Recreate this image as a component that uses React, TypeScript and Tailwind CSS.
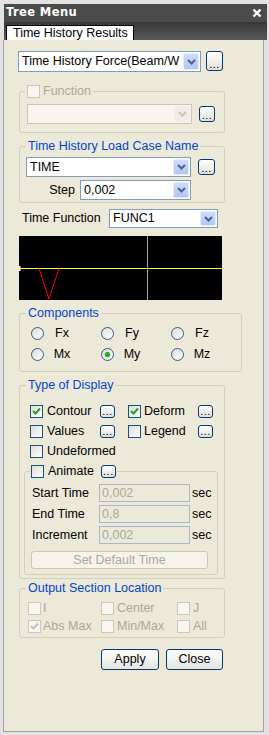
import React from "react";

const FONT = "font-['Liberation_Sans',Arial,sans-serif]";

function Chevron({ color }: { color: string }) {
  return (
    <svg width="9" height="6" viewBox="0 0 9 6">
      <polyline points="1,1 4.5,4.5 8,1" fill="none" stroke={color} strokeWidth="2" />
    </svg>
  );
}

function Combo({ className, text, disabled }: { className: string; text?: string; disabled?: boolean }) {
  return (
    <div
      className={`flex items-stretch border p-[1px] ${
        disabled ? "border-[#c9c7ba] bg-[#f6f5f0]" : "border-[#7f9db9] bg-white"
      } ${className}`}
    >
      <div className="flex-1 flex items-center pl-[2px] overflow-hidden whitespace-nowrap">{text}</div>
      <div
        className={`w-[16px] shrink-0 flex items-center justify-center rounded-[2px] border ${
          disabled
            ? "border-[#f0efe9] bg-[#eeede7]"
            : "border-[#e3ebfd] bg-gradient-to-b from-[#cddcfd] to-[#b1c6f5]"
        }`}
      >
        <Chevron color={disabled ? "#c9c7ba" : "#4d6185"} />
      </div>
    </div>
  );
}

function Dots({ className }: { className: string }) {
  return (
    <div
      className={`flex items-end justify-center rounded-[3px] border border-[#003c74] bg-gradient-to-b from-white to-[#e2e1d9] ${className}`}
    >
      <span className="text-[11px] leading-[9px] pb-[1px] tracking-[0.5px]">...</span>
    </div>
  );
}

function Check({ checked, disabled }: { checked?: boolean; disabled?: boolean }) {
  return (
    <div
      className={`w-[13px] h-[13px] shrink-0 flex items-center justify-center border ${
        disabled
          ? "border-[#cac8bb] bg-[#f7f6f1]"
          : "border-[#1c5180] bg-gradient-to-br from-[#dcdcd7] to-white"
      }`}
    >
      {checked && (
        <svg width="9" height="9" viewBox="0 0 9 9">
          <polyline
            points="1,4 3.5,6.5 8,1.5"
            fill="none"
            stroke={disabled ? "#c4c2b6" : "#21a121"}
            strokeWidth="2"
          />
        </svg>
      )}
    </div>
  );
}

function Radio({ checked }: { checked?: boolean }) {
  return (
    <div className="w-[13px] h-[13px] shrink-0 rounded-full border border-[#2f5d8a] bg-gradient-to-br from-[#dcdcd7] to-white flex items-center justify-center">
      {checked && <div className="w-[5px] h-[5px] rounded-full bg-[#2aa72a] shadow-[0_0_1px_#58c558]" />}
    </div>
  );
}

function Legend({ children }: { children: React.ReactNode }) {
  return <legend className="ml-[6px] px-[2px] text-[#0046d5] leading-[14px]">{children}</legend>;
}

function TimeRow({ label, value }: { label: string; value: string }) {
  return (
    <div className="flex items-center h-[18px]">
      <div className="w-[67px]">{label}</div>
      <div className="w-[91px] h-[18px] border border-[#a6b8cc] bg-[#ece9d8] text-[#aca899] pl-[2px] flex items-center">
        {value}
      </div>
      <div className="ml-[2px]">sec</div>
    </div>
  );
}

export default function App() {
  return (
    <div className={`w-[269px] h-[735px] bg-[#e2e2e2] pl-[3px] pr-[2px] pt-[4px] pb-[3px] flex flex-col text-[12.5px] text-black ${FONT}`}>
      <div className="h-[18px] ml-[1px] bg-[#4b4b4b] flex items-center justify-between pl-[2px] pr-[5px]">
        <span className="text-white font-bold text-[11.5px] tracking-[0.4px] font-['DejaVu_Sans',sans-serif]">Tree Menu</span>
        <svg width="10" height="10" viewBox="0 0 10 10">
          <path d="M1.5 1.5 L8.5 8.5 M8.5 1.5 L1.5 8.5" stroke="white" strokeWidth="2.4" />
        </svg>
      </div>
      <div className="h-[18px] ml-[1px] bg-gradient-to-b from-[#383838] to-[#5a5a5a] flex items-end pl-[2px]">
        <div className="w-[128px] h-[15px] bg-white border border-b-0 border-black pl-[6px] leading-[14px] whitespace-nowrap">
          Time History Results
        </div>
      </div>
      <div className="flex-1 mr-[3px] bg-[#ece9d8] border-x border-b border-[#a3a3a3] pl-[14px] flex flex-col">
        <div className="mt-[11px] flex items-start">
          <Combo className="w-[183px] h-[21px]" text="Time History Force(Beam/W" />
          <Dots className="ml-[5px] w-[17px] h-[20px]" />
        </div>

        <fieldset className="mt-[12px] ml-[1px] w-[206px] rounded-[3px] border border-[#d0d0bf] pb-[8px]">
          <legend className="ml-[5px] px-[2px] leading-[14px]">
            <span className="flex items-center gap-[3px] text-[#aca899]">
              <Check disabled />
              Function
            </span>
          </legend>
          <div className="mt-[6px] pl-[7px] flex items-center">
            <Combo className="w-[165px] h-[20px]" disabled />
            <Dots className="ml-[7px] w-[16px] h-[16px]" />
          </div>
        </fieldset>

        <fieldset className="mt-[6px] ml-[1px] w-[206px] rounded-[3px] border border-[#d0d0bf] pb-[2px]">
          <Legend>Time History Load Case Name</Legend>
          <div className="mt-[4px] pl-[6px] flex items-center">
            <Combo className="w-[165px] h-[20px]" text="TIME" />
            <Dots className="ml-[7px] w-[17px] h-[16px]" />
          </div>
          <div className="mt-[3px] pl-[6px] flex items-center">
            <div className="w-[49px] text-right">Step</div>
            <Combo className="ml-[5px] w-[111px] h-[20px]" text="0,002" />
          </div>
        </fieldset>

        <div className="mt-[6px] pl-[4px] flex items-center">
          <div className="w-[87px]">Time Function</div>
          <Combo className="w-[109px] h-[19px]" text="FUNC1" />
        </div>

        <svg className="mt-[8px] ml-[1px]" width="203" height="64" viewBox="0 0 203 64">
          <rect width="203" height="64" fill="#000" />
          <line x1="128.5" y1="0" x2="128.5" y2="64" stroke="#a8a8a8" strokeWidth="1" />
          <line x1="0" y1="32.5" x2="203" y2="32.5" stroke="#ffff00" strokeWidth="1" />
          <polyline points="20,32.5 30,63 40,32.5" fill="none" stroke="#ff0000" strokeWidth="1" />
          <rect x="0" y="30" width="1.5" height="5" fill="#fff" />
        </svg>

        <fieldset className="mt-[6px] ml-[1px] w-[206px] rounded-[3px] border border-[#d0d0bf] pb-[10px]">
          <Legend>Components</Legend>
          <div className="mt-[7px] pl-[11px] flex flex-col gap-[8px]">
            {[
              ["Fx", "Fy", "Fz"],
              ["Mx", "My", "Mz"],
            ].map((row) => (
              <div key={row[0]} className="flex h-[13px]">
                {row.map((c) => (
                  <div key={c} className="w-[70px] flex items-center">
                    <Radio checked={c === "My"} />
                    <div className="ml-[2px] w-[32px] text-center leading-[13px]">{c}</div>
                  </div>
                ))}
              </div>
            ))}
          </div>
        </fieldset>

        <fieldset className="mt-[6px] ml-[1px] w-[206px] rounded-[3px] border border-[#d0d0bf]">
          <Legend>Type of Display</Legend>
          <div className="mt-[13px] pl-[10px] flex flex-col gap-[7px]">
            <div className="flex items-center h-[13px]">
              <div className="w-[70px] flex items-center">
                <Check checked />
                <span className="ml-[4px]">Contour</span>
              </div>
              <Dots className="w-[15px] h-[13px]" />
              <div className="ml-[13px] w-[70px] flex items-center">
                <Check checked />
                <span className="ml-[3px]">Deform</span>
              </div>
              <Dots className="w-[15px] h-[13px]" />
            </div>
            <div className="flex items-center h-[13px]">
              <div className="w-[70px] flex items-center">
                <Check />
                <span className="ml-[4px]">Values</span>
              </div>
              <Dots className="w-[15px] h-[13px]" />
              <div className="ml-[13px] w-[70px] flex items-center">
                <Check />
                <span className="ml-[3px]">Legend</span>
              </div>
              <Dots className="w-[15px] h-[13px]" />
            </div>
            <div className="flex items-center h-[13px]">
              <Check />
              <span className="ml-[4px]">Undeformed</span>
            </div>
          </div>
          <fieldset className="mt-[7px] ml-[4px] mb-[3px] w-[194px] rounded-[3px] border border-[#d0d0bf] pb-[5px]">
            <legend className="ml-[5px] px-[1px]">
              <span className="flex items-center h-[13px]">
                <Check />
                <span className="ml-[4px] mr-[7px]">Animate</span>
                <Dots className="w-[15px] h-[13px]" />
              </span>
            </legend>
            <div className="mt-[6px] pl-[7px] flex flex-col gap-[3px]">
              <TimeRow label="Start Time" value="0,002" />
              <TimeRow label="End Time" value="0,8" />
              <TimeRow label="Increment" value="0,002" />
            </div>
            <div className="mt-[7px] ml-[6px] w-[177px] h-[18px] rounded-[3px] border border-[#c9c7ba] bg-[#f5f4ea] text-[#aca899] flex items-center justify-center">
              Set Default Time
            </div>
          </fieldset>
        </fieldset>

        <fieldset className="mt-[2px] ml-[1px] w-[206px] rounded-[3px] border border-[#d0d0bf] pb-[4px]">
          <Legend>Output Section Location</Legend>
          <div className="mt-[7px] pl-[8px] flex flex-col gap-[5px] text-[#aca899]">
            {[
              [["I", false], ["Center", false], ["J", false]],
              [["Abs Max", true], ["Min/Max", false], ["All", false]],
            ].map((row, i) => (
              <div key={i} className="flex h-[13px]">
                {row.map(([label, checked], j) => (
                  <div
                    key={label as string}
                    className={`flex items-center ${j === 0 ? "w-[73px]" : j === 1 ? "w-[76px]" : ""}`}
                  >
                    <Check disabled checked={checked as boolean} />
                    <span className={j === 0 ? "ml-[2px]" : "ml-[3px]"}>{label as string}</span>
                  </div>
                ))}
              </div>
            ))}
          </div>
        </fieldset>

        <div className="mt-[11px] ml-[83px] flex">
          <div className="w-[58px] h-[21px] rounded-[3px] border border-[#003c74] bg-gradient-to-b from-white to-[#e6e5de] flex items-center justify-center">
            Apply
          </div>
          <div className="ml-[7px] w-[57px] h-[21px] rounded-[3px] border border-[#003c74] bg-gradient-to-b from-white to-[#e6e5de] flex items-center justify-center">
            Close
          </div>
        </div>
      </div>
    </div>
  );
}
